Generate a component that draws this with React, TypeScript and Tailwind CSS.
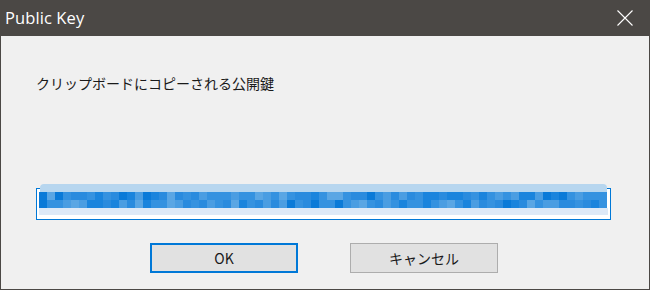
import React from 'react';

const cellShades = [
  'bg-[#0a7ad8]',
  'bg-[#1a84dd]',
  'bg-[#2a8bde]',
  'bg-[#3592e0]',
  'bg-[#4a9de2]',
  'bg-[#5aa6e4]',
];

// deterministic noise so the blurred key looks the same on every render
function shadeFor(row: number, col: number) {
  const n = Math.abs(Math.sin(row * 91.7 + col * 12.9898) * 43758.5453);
  const f = n - Math.floor(n);
  const weights = [0.08, 0.22, 0.5, 0.75, 0.92, 1];
  const idx = weights.findIndex((w) => f < w);
  return cellShades[idx];
}

const COLS = 71;

function BlurredKey() {
  return (
    <div className="absolute left-[3px] right-[3px] top-0 flex flex-col">
      <div className="h-[8px] mx-[1px] bg-[#b7d6ef] rounded-t-sm" />
      {[0, 1].map((row) => (
        <div key={row} className="flex h-[8px]">
          {Array.from({ length: COLS }).map((_, col) => (
            <div key={col} className={`w-[8px] h-[8px] ${shadeFor(row, col)}`} />
          ))}
        </div>
      ))}
      <div className="h-[7px] bg-[#dde9f7]" />
    </div>
  );
}

export default function App() {
  const font = { fontFamily: '"Noto Sans CJK JP", "Noto Sans", sans-serif' };
  return (
    <div className="w-[650px] h-[290px] flex flex-col bg-[#f0f0f0] border-x border-b border-[#4b4845] overflow-hidden">
      {/* Title bar */}
      <div className="h-[36px] shrink-0 bg-[#4b4845] flex items-center justify-between pl-[4px] pr-[16px]">
        <span className="text-[16.5px] text-white font-['Open_Sans',sans-serif] tracking-[0.1px]">Public Key</span>
        <svg width="16" height="16" viewBox="0 0 16 16">
          <path d="M0.5 0.5 L15.5 15.5 M15.5 0.5 L0.5 15.5" stroke="#ffffff" strokeWidth="1.1" fill="none" />
        </svg>
      </div>

      {/* Body */}
      <div className="flex-1 flex flex-col px-[35px] pt-[37px]" style={font}>
        <p className="text-[14px] leading-[20px] text-[#1a1a1a]">クリップボードにコピーされる公開鍵</p>

        <div className="relative mt-[91px] h-[36px] w-[575px]">
          <div className="absolute left-0 right-0 bottom-0 h-[32px] border border-[#0078d7] bg-white" />
          <BlurredKey />
        </div>

        <div className="flex justify-center gap-[52px] mt-[23px] pr-[2px]">
          <button className="w-[148px] h-[30px] border-2 border-[#0078d7] bg-[#e1e1e1] text-[14px] text-[#1a1a1a]">
            OK
          </button>
          <button className="w-[148px] h-[30px] border border-[#adadad] bg-[#e1e1e1] text-[14px] text-[#1a1a1a]">
            キャンセル
          </button>
        </div>
      </div>
    </div>
  );
}
